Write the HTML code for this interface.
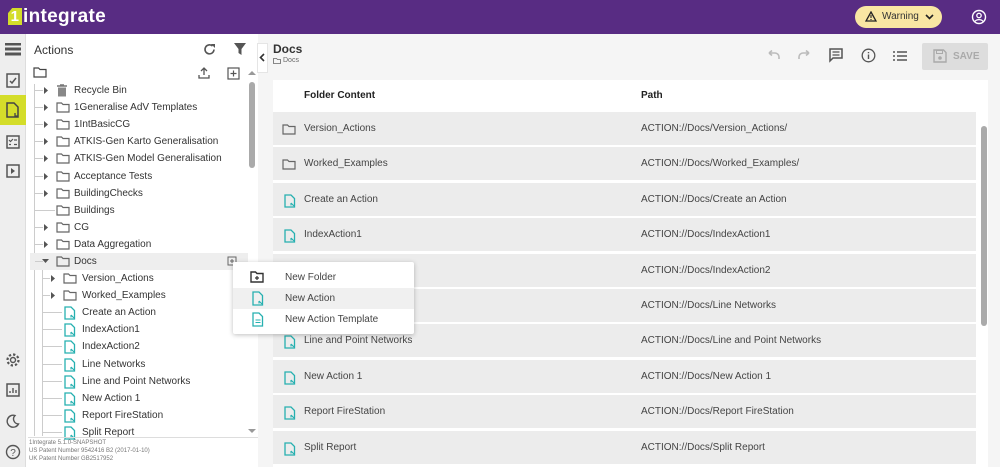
<!DOCTYPE html>
<html><head><meta charset="utf-8"><style>
*{box-sizing:border-box;margin:0;padding:0}
body{width:1000px;height:467px;overflow:hidden;font-family:"Liberation Sans",Arial,sans-serif;background:#f5f5f5;position:relative;color:#333}
.a{position:absolute}
.hdr{left:0;top:0;width:1000px;height:34px;background:#582c83}
.logo{left:8px;top:6px;color:#fff;font-size:19px;font-weight:bold;letter-spacing:0.3px}
.logo b{display:inline-block;background:#d4dd2a;color:#fff;width:14px;height:17px;font-size:15px;text-align:center;line-height:17px;vertical-align:1px;margin-right:1px;clip-path:polygon(30% 0,100% 0,100% 100%,0 100%,0 30%)}
.warn{left:855px;top:6px;width:87px;height:22px;border-radius:11px;background:#f9e6a3;font-size:10px;color:#333;line-height:22px;padding-left:27px}
.lbar{left:0;top:34px;width:26px;height:433px;background:#eee;border-right:1px solid #ddd}
.side{left:26px;top:34px;width:232px;height:433px;background:#fff}
.t{font-size:10px;color:#333;white-space:nowrap;line-height:17px;height:17px}
.card{left:273px;top:80px;width:715px;height:387px;background:#fff}
.row{left:273px;width:703px;height:33px;background:#ececec;font-size:10px;color:#444;line-height:33px}
.hl{background:#eee}
.menu{left:233px;top:262px;width:181px;height:72px;background:#fff;box-shadow:0 1px 5px rgba(0,0,0,.25);border-radius:2px}
.mi{position:absolute;left:0;width:181px;height:21px;font-size:10px;color:#444;line-height:21px;padding-left:52px}
</style></head><body>
<div class="a hdr"></div>
<div class="a logo"><b>1</b>integrate</div>
<div class="a warn"><svg class="a" style="left:10px;top:5px" width="12" height="11" viewBox="0 0 12 11"><path d="M6 1L11 10H1Z" fill="none" stroke="#222" stroke-width="1.3"/><path d="M6 4v3M6 8v1" stroke="#222" stroke-width="1.1"/></svg>Warning<svg class="a" style="left:70px;top:8px" width="9" height="6"><path d="M1 1l3.5 3.5L8 1" fill="none" stroke="#222" stroke-width="1.6"/></svg></div>
<svg class="a" style="left:971px;top:9px" width="16" height="16" viewBox="0 0 16 16"><circle cx="8" cy="8" r="6.5" fill="none" stroke="#fff" stroke-width="1.4"/><circle cx="8" cy="6.5" r="2.2" fill="none" stroke="#fff" stroke-width="1.3"/><path d="M3.8 12.5c2-2.5 6.4-2.5 8.4 0" fill="none" stroke="#fff" stroke-width="1.3"/></svg>

<div class="a lbar"></div>
<svg class="a" style="left:5px;top:43px" width="16" height="13"><path d="M0 1h16M0 6h16M0 11h16" stroke="#555" stroke-width="3"/></svg>
<svg class="a" style="left:6px;top:72px" width="14" height="16"><rect x="1" y="2" width="12" height="13" fill="none" stroke="#555" stroke-width="1.5"/><path d="M4 9l2 2 4-5" fill="none" stroke="#555" stroke-width="1.5"/></svg>
<div class="a" style="left:0;top:95px;width:26px;height:30px;background:#d4dd2a"></div>
<svg class="a" style="left:6px;top:102px" width="14" height="16"><path d="M1 1h7l4 4v10H1Z" fill="none" stroke="#444" stroke-width="1.5"/><path d="M9 11v3h3" stroke="#444" stroke-width="1.3" fill="none"/></svg>
<svg class="a" style="left:6px;top:135px" width="14" height="14"><rect x="1" y="1" width="12" height="12" fill="none" stroke="#555" stroke-width="1.5"/><path d="M3 5l1.5 1.5L7 4M3 9.5h2M8 5h3M8 9.5h3" stroke="#555" stroke-width="1.2" fill="none"/></svg>
<svg class="a" style="left:6px;top:164px" width="14" height="14"><rect x="1" y="1" width="12" height="12" fill="none" stroke="#555" stroke-width="1.5"/><path d="M5 4v6l4-3z" fill="#555"/></svg>
<svg class="a" style="left:5px;top:352px" width="16" height="16" viewBox="0 0 16 16"><circle cx="8" cy="8" r="2.5" fill="none" stroke="#555" stroke-width="1.4"/><circle cx="8" cy="8" r="5.5" fill="none" stroke="#555" stroke-width="2.2" stroke-dasharray="2.3 2"/></svg>
<svg class="a" style="left:6px;top:383px" width="14" height="14"><rect x="1" y="1" width="12" height="12" fill="none" stroke="#555" stroke-width="1.5"/><path d="M4 10V8M7 10V5M10 10V7" stroke="#555" stroke-width="1.4"/></svg>
<svg class="a" style="left:6px;top:414px" width="14" height="14"><path d="M9 1.5A6 6 0 1 0 12.5 10 5 5 0 0 1 9 1.5Z" fill="none" stroke="#555" stroke-width="1.4"/></svg>
<svg class="a" style="left:5px;top:444px" width="16" height="16"><circle cx="8" cy="8" r="6.5" fill="none" stroke="#555" stroke-width="1.4"/><text x="8" y="12" font-size="10" text-anchor="middle" fill="#555" font-family="Liberation Sans">?</text></svg>

<div class="a side"></div>
<div class="a" style="left:34px;top:43px;font-size:12px;color:#333">Actions</div>
<svg class="a" style="left:203px;top:43px" width="13" height="13" viewBox="0 0 13 13"><path d="M11 6.5A4.5 4.5 0 1 1 9.5 3" fill="none" stroke="#555" stroke-width="1.6"/><path d="M8 1h4v4z" fill="#555"/></svg>
<svg class="a" style="left:234px;top:43px" width="12" height="12"><path d="M0 0h12L7.5 6v6l-3-2V6z" fill="#555"/></svg>
<svg class="a" style="left:33px;top:67px" width="14" height="11"><path d="M1 1h4.5l1.5 1.5h6v7.5H1Z" fill="none" stroke="#444" stroke-width="1.2"/></svg>
<svg class="a" style="left:198px;top:67px" width="12" height="12"><path d="M6 8V1M3 4l3-3 3 3M1 8v3h10V8" fill="none" stroke="#555" stroke-width="1.3"/></svg>
<svg class="a" style="left:227px;top:67px" width="13" height="13"><rect x="1" y="1" width="11" height="11" fill="none" stroke="#555" stroke-width="1.2"/><path d="M6.5 3.5v6M3.5 6.5h6" stroke="#555" stroke-width="1.2"/></svg>
<div class="a" style="left:249px;top:82px;width:6px;height:86px;background:#aaa;border-radius:3px"></div>
<div class="a" style="left:248px;top:71px;width:0;height:0;border:4px solid transparent;border-bottom-color:#999;border-top:none"></div>
<div class="a" style="left:248px;top:429px;width:0;height:0;border:4px solid transparent;border-top-color:#999;border-bottom:none"></div>

<div class="a" style="left:34px;top:84px;width:1px;height:352px;background:#ccc"></div>
<div class="a" style="left:42px;top:270px;width:1px;height:166px;background:#ccc"></div>
<div class="a hl" style="left:30px;top:253px;width:218px;height:17px"></div>
<svg class="a" style="left:227px;top:256px" width="11" height="11"><rect x="1" y="1" width="8" height="8" fill="none" stroke="#666" stroke-width="1"/><path d="M5 3v4M3 5h4" stroke="#666"/></svg>

<div class="a" style="left:0;top:0" id="tree"></div>
<div class="a" style="left:28px;top:437px;width:230px;height:1px;background:#ddd"></div>
<div class="a" style="left:29px;top:439px;font-size:6px;color:#777;line-height:8px">1Integrate 5.1.0-SNAPSHOT<br>US Patent Number 9542416 B2 (2017-01-10)<br>UK Patent Number GB2517952</div>

<div class="a" style="left:257px;top:43px;width:11px;height:30px;background:#fff;border:1px solid #e5e5e5"></div>
<svg class="a" style="left:259px;top:53px" width="6" height="9"><path d="M5 1L1.5 4.5 5 8" fill="none" stroke="#333" stroke-width="1.6"/></svg>

<div class="a" style="left:273px;top:42px;font-size:12px;font-weight:bold;color:#333">Docs</div>
<svg class="a" style="left:273px;top:58px" width="8" height="6"><path d="M.5.5h3l1 1h3v4h-7z" fill="none" stroke="#666" stroke-width=".8"/></svg>
<div class="a" style="left:283px;top:57px;font-size:7px;color:#666">Docs</div>
<svg class="a" style="left:766px;top:50px" width="15" height="10"><path d="M3 3h6a4 4 0 0 1 4 4v2M3 3l3-2.5M3 3l3 2.5" fill="none" stroke="#bbb" stroke-width="1.6"/></svg>
<svg class="a" style="left:797px;top:50px" width="15" height="10"><path d="M12 3H6a4 4 0 0 0-4 4v2M12 3L9 .5M12 3L9 5.5" fill="none" stroke="#bbb" stroke-width="1.6"/></svg>
<svg class="a" style="left:829px;top:48px" width="15" height="15"><path d="M1 1h12v9H4l-3 3z" fill="none" stroke="#555" stroke-width="1.5"/><path d="M3.5 4h7M3.5 7h7" stroke="#555" stroke-width="1.2"/></svg>
<svg class="a" style="left:861px;top:48px" width="15" height="15"><circle cx="7.5" cy="7.5" r="6.3" fill="none" stroke="#555" stroke-width="1.3"/><path d="M7.5 6.5v4.5M7.5 4v1.3" stroke="#555" stroke-width="1.4"/></svg>
<svg class="a" style="left:893px;top:51px" width="14" height="10"><path d="M0 1h2M4 1h10M0 5h2M4 5h10M0 9h2M4 9h10" stroke="#555" stroke-width="1.6"/></svg>
<div class="a" style="left:922px;top:43px;width:66px;height:27px;background:#ddd;border-radius:2px;font-size:10px;color:#aaa;font-weight:bold;line-height:27px;padding-left:31px">SAVE</div>
<svg class="a" style="left:933px;top:49px" width="14" height="14"><path d="M1 1h9.5L13 3.5V13H1Z" fill="none" stroke="#aaa" stroke-width="1.4"/><rect x="3.5" y="1.5" width="6" height="3" fill="none" stroke="#aaa"/><circle cx="7" cy="9" r="1.8" fill="#aaa"/></svg>

<div class="a card"></div>
<div class="a" style="left:304px;top:90px;font-size:10px;font-weight:bold;color:#222">Folder Content</div>
<div class="a" style="left:641px;top:90px;font-size:10px;font-weight:bold;color:#222">Path</div>
<div id="rows"></div>
<div class="a" style="left:981px;top:126px;width:6px;height:200px;background:#aaa;border-radius:3px"></div>

<div class="a menu">
<div class="mi" style="top:5px">New Folder</div>
<div class="mi" style="top:26px;background:#f0f0f0">New Action</div>
<div class="mi" style="top:47px">New Action Template</div>
<svg class="a" style="left:17px;top:9px" width="14" height="12"><path d="M1 1h4.5l1.5 1.5h6V11H1Z" fill="none" stroke="#333" stroke-width="1.4"/><path d="M7 5v4M5 7h4" stroke="#333" stroke-width="1.2"/></svg>
<svg class="a" style="left:19px;top:29px" width="12" height="15"><path d="M1 1h6l3.5 3.5V14H1Z" fill="none" stroke="#26b0b0" stroke-width="1.3"/><path d="M7 10l3 3M7 10v2.5" stroke="#26b0b0" stroke-width="1.1"/></svg>
<svg class="a" style="left:19px;top:50px" width="12" height="15"><path d="M1 1h6l3.5 3.5V14H1Z" fill="none" stroke="#26b0b0" stroke-width="1.3"/><path d="M3.5 8h5M3.5 10.5h5" stroke="#26b0b0" stroke-width="1.1"/></svg>
</div>

<script>
var F='<svg width="14" height="11" style="position:absolute;top:3px"><path d="M1 1h4.5l1.5 1.5h6v7.5H1Z" fill="none" stroke="#666" stroke-width="1.2"/></svg>';
var B='<svg width="12" height="13" style="position:absolute;top:2px"><path d="M1 2h10M4 1h4" stroke="#777" stroke-width="1.5"/><path d="M2 3.5h8v9H2z" fill="#888"/></svg>';
var A='<svg width="12" height="14" style="position:absolute;top:2px"><path d="M1 1h6l3.5 3.5V13H1Z" fill="none" stroke="#26b0b0" stroke-width="1.3"/><path d="M7 9l3 3M7 9v2.5" stroke="#26b0b0" stroke-width="1.1"/></svg>';
var AR='<svg width="5" height="7" style="position:absolute;top:5px"><path d="M0 0l4 3.5L0 7z" fill="#555"/></svg>';
var AD='<svg width="7" height="5" style="position:absolute;top:6px"><path d="M0 0h7L3.5 4z" fill="#555"/></svg>';
var tops=[["Recycle Bin",B,1],["1Generalise AdV Templates",F,1],["1IntBasicCG",F,1],["ATKIS-Gen Karto Generalisation",F,1],["ATKIS-Gen Model Generalisation",F,1],["Acceptance Tests",F,1],["BuildingChecks",F,1],["Buildings",F,0],["CG",F,1],["Data Aggregation",F,1],["Docs",F,2]];
var ch=[["Version_Actions",F,1],["Worked_Examples",F,1],["Create an Action",A,0],["IndexAction1",A,0],["IndexAction2",A,0],["Line Networks",A,0],["Line and Point Networks",A,0],["New Action 1",A,0],["Report FireStation",A,0],["Split Report",A,0]];
var h='';
tops.forEach(function(r,i){var y=82+i*17.1;
h+='<div class="a" style="left:35px;top:'+(y+8)+'px;width:'+(r[2]?8:20)+'px;height:1px;background:#ccc"></div>';
if(r[2]==1)h+='<div class="a" style="left:44px;top:'+y+'px">'+AR+'</div>';
if(r[2]==2)h+='<div class="a" style="left:42px;top:'+y+'px">'+AD+'</div>';
h+='<div class="a" style="left:56px;top:'+y+'px">'+r[1]+'</div><div class="a t" style="left:74px;top:'+y+'px">'+r[0]+'</div>';});
ch.forEach(function(r,i){var y=270+i*17.1;
h+='<div class="a" style="left:43px;top:'+(y+8)+'px;width:'+(r[2]?7:19)+'px;height:1px;background:#ccc"></div>';
if(r[2])h+='<div class="a" style="left:51px;top:'+y+'px">'+AR+'</div>';
h+='<div class="a" style="left:'+(r[1]==A?64:63)+'px;top:'+y+'px">'+r[1]+'</div><div class="a t" style="left:82px;top:'+y+'px">'+r[0]+'</div>';});
document.getElementById('tree').innerHTML=h;
var rows=[["Version_Actions",F,"ACTION://Docs/Version_Actions/"],["Worked_Examples",F,"ACTION://Docs/Worked_Examples/"],["Create an Action",A,"ACTION://Docs/Create an Action"],["IndexAction1",A,"ACTION://Docs/IndexAction1"],["IndexAction2",A,"ACTION://Docs/IndexAction2"],["Line Networks",A,"ACTION://Docs/Line Networks"],["Line and Point Networks",A,"ACTION://Docs/Line and Point Networks"],["New Action 1",A,"ACTION://Docs/New Action 1"],["Report FireStation",A,"ACTION://Docs/Report FireStation"],["Split Report",A,"ACTION://Docs/Split Report"]];
var g='';rows.forEach(function(r,i){var y=112+i*35.4;
g+='<div class="a row" style="top:'+y+'px"><div class="a" style="left:'+(r[1]==A?11:9)+'px;top:9px">'+r[1]+'</div><span class="a" style="left:31px">'+r[0]+'</span><span class="a" style="left:368px">'+r[2]+'</span></div>';});
document.getElementById('rows').innerHTML=g;
</script>
</body></html>
